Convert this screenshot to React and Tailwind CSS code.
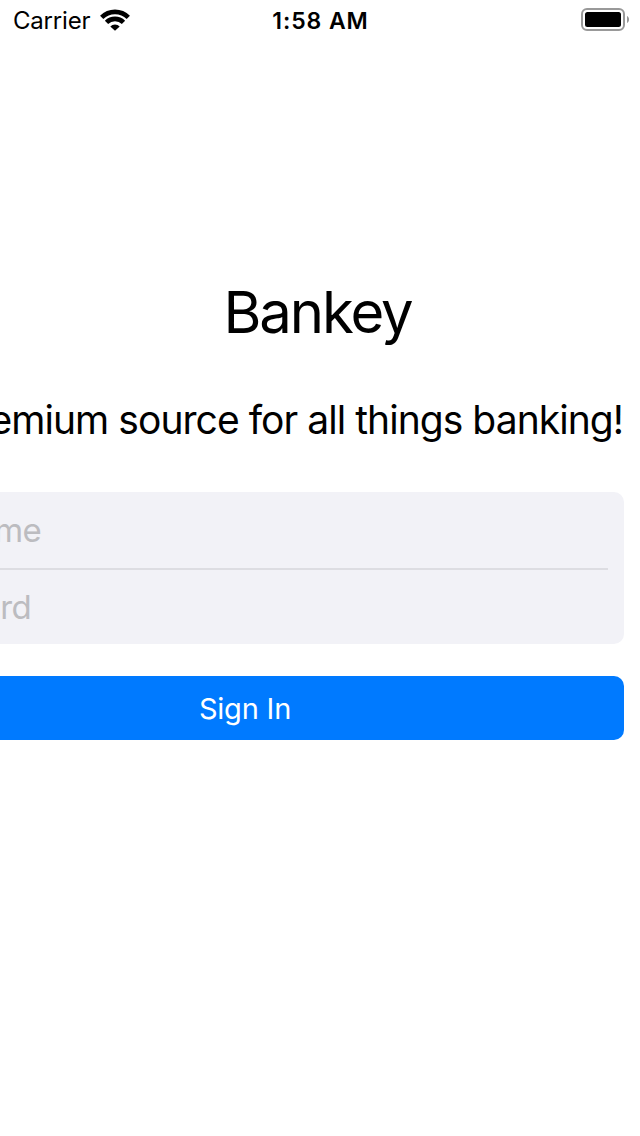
export default function App() {
  return (
    <div className="h-[1136px] w-[640px] overflow-hidden bg-white text-black font-[Inter,sans-serif]">
      <header className="grid h-10 grid-cols-3 items-center pl-[13px] pr-[11px]">
        <div className="flex items-center gap-[10px]">
          <span className="pt-[2px] text-[24px] leading-none tracking-[-0.2px]">Carrier</span>
          <svg width="30" height="22" viewBox="0 0 30 22" fill="none" stroke="black" strokeWidth="4.6">
            <path d="M1.7 8.4a18.8 18.8 0 0 1 26.6 0M6.5 13.4a12 12 0 0 1 17 0" />
            <path d="M15 21.8l-4.7-4.4a6.6 6.6 0 0 1 9.4 0z" fill="black" stroke="none" />
          </svg>
        </div>
        <span className="pt-[2px] pr-[1px] text-center text-[23px] leading-none font-semibold tracking-[0.9px] whitespace-nowrap">1:58 AM</span>
        <svg className="justify-self-end" width="48" height="24" viewBox="0 0 48 24">
          <rect x="1" y="1" width="42" height="21" rx="5" fill="none" stroke="#999" strokeWidth="2" />
          <rect x="4" y="4" width="36" height="15" rx="2.5" />
          <path d="M46 8c2.7 1 2.7 6 0 7z" fill="#999" />
        </svg>
      </header>
      <main className="flex flex-col pt-[236px]">
        <h1 className="pr-[5px] text-center text-[58px] leading-[72px] tracking-[-2.1px]">Bankey</h1>
        <div className="mt-12 flex h-[48px] justify-end pr-[17px]">
          <p className="shrink-0 text-[39px] leading-[48px] tracking-[-0.95px] whitespace-nowrap">Your premium source for all things banking!</p>
        </div>
        <form className="mt-12 mr-4 -ml-[134px]">
          <div className="flex h-[152px] flex-col rounded-[10px] bg-[#f2f2f7] pr-4 text-[33px] tracking-[-0.7px] text-[#bcbcc0]">
            <div className="flex h-[76px] w-[175px] items-center justify-end pt-[2px]">Username</div>
            <div className="h-[2px] bg-[#dddde2]" />
            <div className="flex h-[74px] w-[165px] items-center justify-end pt-[2px]">Password</div>
          </div>
          <button type="button" className="mt-8 h-16 w-full rounded-[10px] bg-[#007aff] pt-[1px] text-[29px] tracking-[-0.2px] text-white">Sign In</button>
        </form>
      </main>
    </div>
  );
}
